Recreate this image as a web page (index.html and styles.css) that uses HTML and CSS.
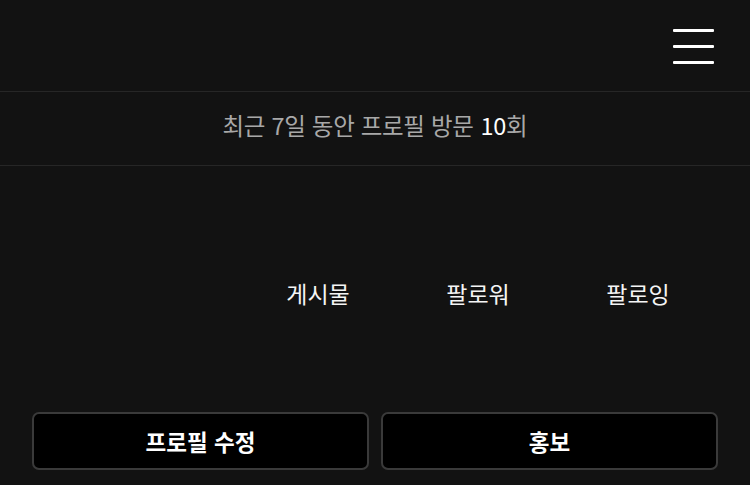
FILE: index.html
```html
<!DOCTYPE html>
<html lang="ko">
<head>
  <meta charset="UTF-8" />
  <meta name="viewport" content="width=device-width, initial-scale=1.0"/>
  <title>프로필</title>
  <link rel="stylesheet" href="styles.css">
</head>
<body>
  <header class="topbar">
    <button class="menu-btn" aria-label="메뉴">
      <span></span>
      <span></span>
      <span></span>
    </button>
  </header>

  <div class="visits">
    최근 7일 동안 프로필 방문 <strong>10</strong>회
  </div>

  <section class="profile">
    <div class="avatar-slot"></div>
    <ul class="stats">
      <li>게시물</li>
      <li>팔로워</li>
      <li>팔로잉</li>
    </ul>
  </section>

  <div class="actions">
    <button class="action">프로필 수정</button>
    <button class="action">홍보</button>
  </div>
</body>
</html>
```

FILE: styles.css
```css
:root {
  --bg: #121212;
  --line: #262626;
  --muted: #a8a8a8;
  --text: #f5f5f5;
}

* {
  margin: 0;
  padding: 0;
  box-sizing: border-box;
  font-family: "Noto Sans CJK KR", "Noto Sans", sans-serif;
}

body {
  background: var(--bg);
  color: var(--text);
  width: 750px;
  height: 485px;
  overflow: hidden;
}

.topbar {
  height: 92px;
  border-bottom: 1px solid var(--line);
  display: flex;
  justify-content: flex-end;
  padding: 29px 36px 0 0;
}

.menu-btn {
  width: 41px;
  height: 35px;
  background: none;
  border: none;
  display: flex;
  flex-direction: column;
  justify-content: space-between;
  cursor: pointer;
}

.menu-btn span {
  display: block;
  height: 3px;
  background: #fff;
  border-radius: 1px;
}

.visits {
  height: 74px;
  border-bottom: 1px solid var(--line);
  display: flex;
  align-items: center;
  justify-content: center;
  padding-bottom: 8px;
  font-size: 23.5px;
  color: var(--muted);
  letter-spacing: -0.3px;
}

.visits strong {
  color: #fff;
  font-weight: 400;
  margin-left: 7px;
}

.profile {
  display: flex;
  height: 246px;
  padding: 8px 32px 0 0;
}

.avatar-slot {
  width: 238px;
}

.stats {
  list-style: none;
  flex: 1;
  display: grid;
  grid-template-columns: repeat(3, 1fr);
  align-items: center;
}

.stats li {
  text-align: center;
  font-size: 23px;
  color: var(--text);
}

.actions {
  display: grid;
  grid-template-columns: 1fr 1fr;
  gap: 12px;
  padding: 0 32px;
}

.action {
  height: 58px;
  background: #000;
  color: #fff;
  border: 2px solid #3a3a3a;
  border-radius: 7px;
  font-size: 22.5px;
  font-weight: 700;
  cursor: pointer;
}
```
